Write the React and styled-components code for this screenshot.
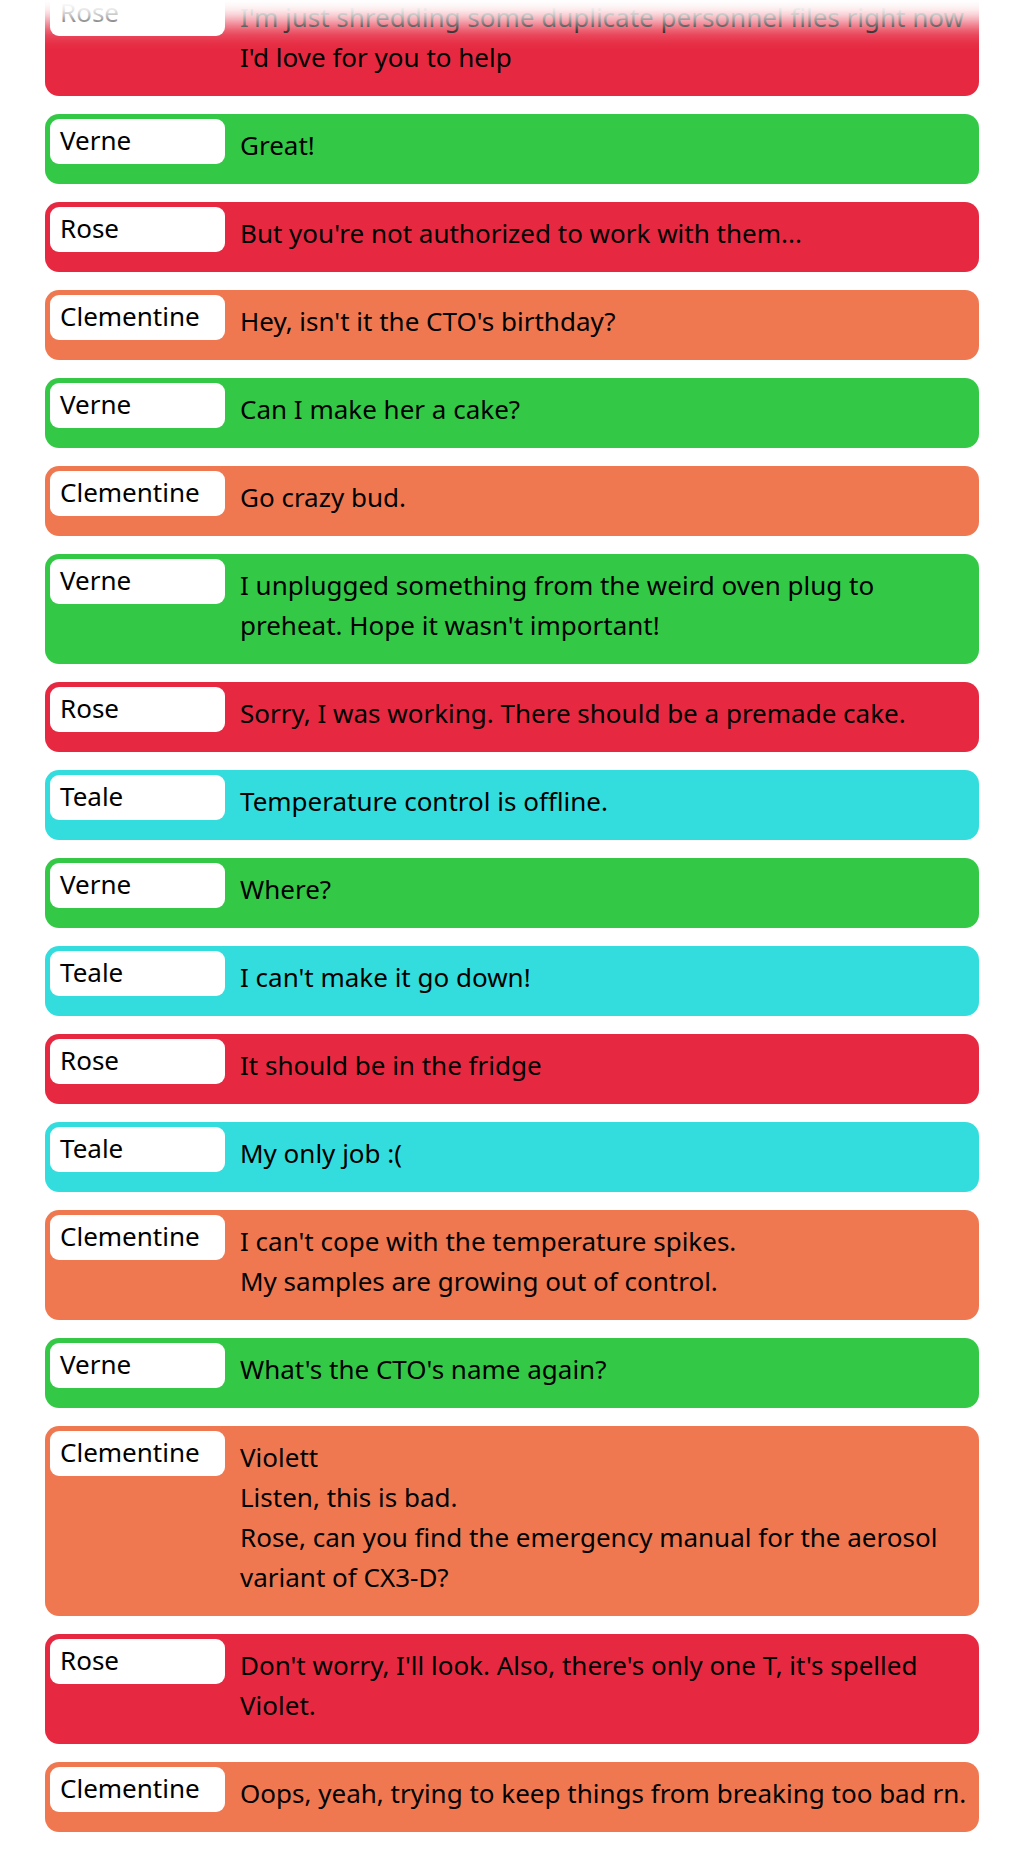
import React from "react";
import styled, { createGlobalStyle } from "styled-components";

const GlobalStyle = createGlobalStyle`
  * {
    box-sizing: border-box;
  }

  body {
    margin: 0;
    background: #ffffff;
    color: #000000;
    font-family: "Noto Sans", "Open Sans", sans-serif;
    font-size: 26px;
    line-height: 40px;
  }
`;

const speakerColors = {
  Rose: "#e62941",
  Verne: "#33c946",
  Clementine: "#f07850",
  Teale: "#33dddd",
};

const messages = [
  {
    speaker: "Rose",
    lines: [
      "I'm just shredding some duplicate personnel files right now",
      "I'd love for you to help",
    ],
  },
  { speaker: "Verne", lines: ["Great!"] },
  { speaker: "Rose", lines: ["But you're not authorized to work with them..."] },
  { speaker: "Clementine", lines: ["Hey, isn't it the CTO's birthday?"] },
  { speaker: "Verne", lines: ["Can I make her a cake?"] },
  { speaker: "Clementine", lines: ["Go crazy bud."] },
  {
    speaker: "Verne",
    lines: [
      "I unplugged something from the weird oven plug to preheat. Hope it wasn't important!",
    ],
  },
  {
    speaker: "Rose",
    lines: ["Sorry, I was working. There should be a premade cake."],
  },
  { speaker: "Teale", lines: ["Temperature control is offline."] },
  { speaker: "Verne", lines: ["Where?"] },
  { speaker: "Teale", lines: ["I can't make it go down!"] },
  { speaker: "Rose", lines: ["It should be in the fridge"] },
  { speaker: "Teale", lines: ["My only job :("] },
  {
    speaker: "Clementine",
    lines: [
      "I can't cope with the temperature spikes.",
      "My samples are growing out of control.",
    ],
  },
  { speaker: "Verne", lines: ["What's the CTO's name again?"] },
  {
    speaker: "Clementine",
    lines: [
      "Violett",
      "Listen, this is bad.",
      "Rose, can you find the emergency manual for the aerosol variant of CX3-D?",
    ],
  },
  {
    speaker: "Rose",
    lines: [
      "Don't worry, I'll look. Also, there's only one T, it's spelled Violet.",
    ],
  },
  {
    speaker: "Clementine",
    lines: ["Oops, yeah, trying to keep things from breaking too bad rn."],
  },
];

/* The newest message stays at the bottom; older ones run off the top. */
const Chat = styled.main`
  position: relative;
  display: flex;
  flex-direction: column;
  justify-content: flex-end;
  height: 100vh;
  padding: 0 45px 24px;
  overflow: hidden;
`;

const TopFade = styled.div`
  position: absolute;
  top: 0;
  left: 0;
  right: 0;
  height: 50px;
  pointer-events: none;
  background: linear-gradient(
    rgba(255, 255, 255, 1) 0%,
    rgba(255, 255, 255, 0.97) 10%,
    rgba(255, 255, 255, 0.9) 20%,
    rgba(255, 255, 255, 0.78) 30%,
    rgba(255, 255, 255, 0.61) 40%,
    rgba(255, 255, 255, 0.43) 50%,
    rgba(255, 255, 255, 0.27) 60%,
    rgba(255, 255, 255, 0.14) 70%,
    rgba(255, 255, 255, 0.07) 80%,
    rgba(255, 255, 255, 0.02) 90%,
    rgba(255, 255, 255, 0) 100%
  );
`;

const MessageList = styled.ol`
  display: flex;
  flex: none;
  flex-direction: column;
  gap: 18px;
  margin: 0;
  padding: 0;
  list-style: none;
`;

const Message = styled.li`
  display: flex;
  align-items: flex-start;
  gap: 15px;
  padding: 5px 10px 19px 5px;
  border-radius: 14px;
  background: ${({ $color }) => $color};
`;

const Speaker = styled.div`
  flex: none;
  width: 175px;
  height: 45px;
  padding: 1px 10px 0;
  border-radius: 9px;
  background: #ffffff;
`;

const Body = styled.div`
  flex: 1;
  min-width: 0;
  padding-top: 6px;
`;

const Line = styled.p`
  margin: 0;
`;

export default function App() {
  return (
    <Chat>
      <GlobalStyle />
      <MessageList>
        {messages.map(({ speaker, lines }, index) => (
          <Message key={index} $color={speakerColors[speaker]}>
            <Speaker>{speaker}</Speaker>
            <Body>
              {lines.map((line) => (
                <Line key={line}>{line}</Line>
              ))}
            </Body>
          </Message>
        ))}
      </MessageList>
      <TopFade />
    </Chat>
  );
}
